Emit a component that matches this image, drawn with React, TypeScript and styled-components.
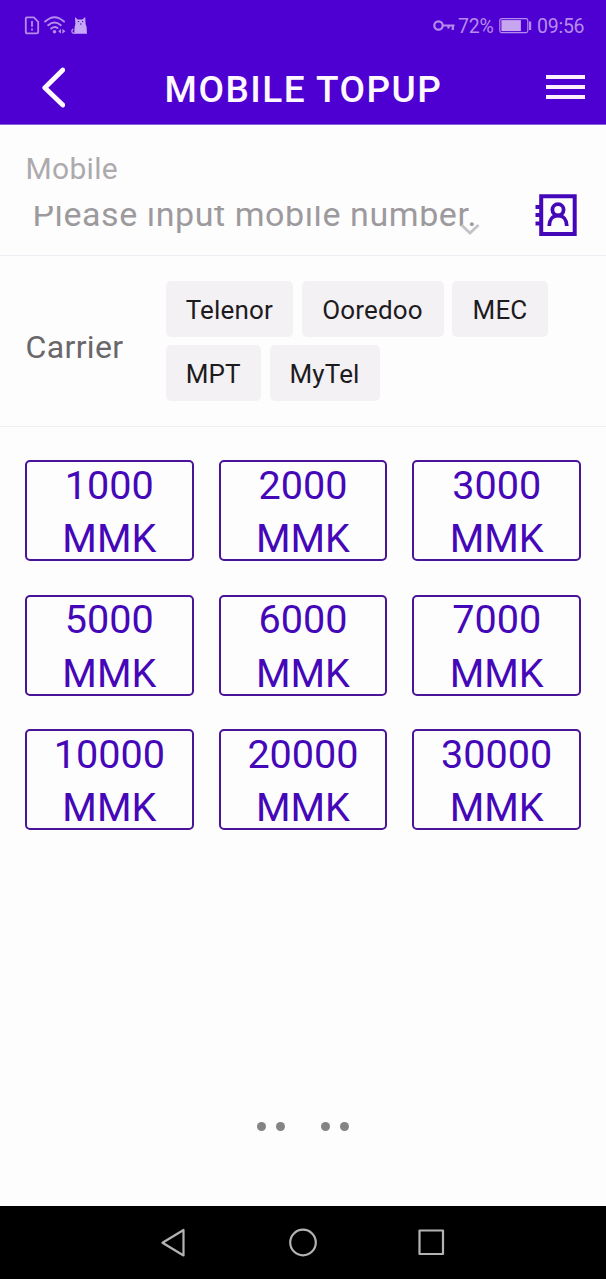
import React from 'react';
import styled, { createGlobalStyle } from 'styled-components';

const GlobalStyle = createGlobalStyle`
  * { box-sizing: border-box; }
  body { margin: 0; background: #fefdfe; font-family: Roboto, "Liberation Sans", sans-serif; }
  button { font-family: inherit; padding: 0; margin: 0; border: 0; background: none; }
`;

const Screen = styled.div`
  width: 606px;
  height: 1279px;
  display: flex;
  flex-direction: column;
  background: #fefdfe;
  overflow: hidden;
`;

const Header = styled.header`
  height: 125px;
  flex: none;
  background: #4d00d1;
  border-bottom: 1px solid #8a60dc;
`;

const StatusBar = styled.div`
  height: 52px;
  padding: 0 22px 0 24px;
  display: flex;
  align-items: center;
  justify-content: space-between;
  color: #b78bee;
`;

const StatusIcons = styled.div<{ $gap?: number }>`
  display: flex;
  align-items: center;
  gap: ${(p) => p.$gap ?? 0}px;
  svg { display: block; }
`;

const StatusText = styled.span<{ $left: number; $width: number }>`
  margin-left: ${(p) => p.$left}px;
  padding-top: 1px;
  font-size: 19.5px;
  line-height: 24px;
  width: ${(p) => p.$width}px;
  white-space: nowrap;
  letter-spacing: -0.25px;
`;

const TitleBar = styled.div`
  height: 72px;
  padding: 0 21px 0 41px;
  display: grid;
  grid-template-columns: 40px 1fr 40px;
  align-items: center;
  svg { display: block; }
`;

const Title = styled.h1`
  margin: 3px 0 0;
  padding-right: 19px;
  text-align: center;
  color: #fff8ff;
  font-size: 37px;
  line-height: 44px;
  font-weight: 500;
  letter-spacing: 1.5px;
  white-space: nowrap;
`;

const MobileSection = styled.section`
  height: 131px;
  flex: none;
  padding: 24px 26px 0 25.5px;
  border-bottom: 1px solid #f0edf4;
`;

const MobileLabel = styled.div`
  color: #acaaad;
  font-size: 30px;
  line-height: 40px;
  letter-spacing: 0.3px;
`;

const NumberRow = styled.div`
  display: flex;
  justify-content: space-between;
  align-items: flex-start;
  height: 50px;
`;

const NumberInput = styled.div`
  position: relative;
  width: 460px;
  height: 35px;
  margin-top: 17px;
  padding-left: 7px;
  overflow: hidden;
  color: #9c9a9d;
  svg { position: absolute; left: 434px; top: 13px; }
`;

const Placeholder = styled.div`
  margin-top: -12px;
  font-size: 34px;
  line-height: 40px;
  letter-spacing: 0.58px;
  white-space: nowrap;
`;

const ContactButton = styled.button`
  margin-top: 5px;
  margin-right: 1px;
  svg { display: block; }
`;

const CarrierSection = styled.section`
  height: 171px;
  flex: none;
  display: flex;
  padding: 25px 25px 25px 25.5px;
  border-bottom: 1px solid #f0edf4;
`;

const CarrierLabel = styled.div`
  width: 140px;
  padding-top: 46px;
  color: #69676a;
  font-size: 32px;
  line-height: 40px;
  letter-spacing: 0.35px;
`;

const ChipList = styled.div`
  flex: 1;
  display: flex;
  flex-wrap: wrap;
  align-content: flex-start;
  gap: 8px 8.5px;
`;

const Chip = styled.button<{ $width: number }>`
  width: ${(p) => p.$width}px;
  height: 56px;
  padding-top: 2px;
  border-radius: 5px;
  background: #f3f1f4;
  color: #1d1b1e;
  font-size: 26px;
  letter-spacing: 0.15px;
`;

const AmountGrid = styled.section`
  display: grid;
  grid-template-columns: repeat(3, 1fr);
  grid-auto-rows: 101px;
  gap: 33.5px 25px;
  padding: 33px 25px 0;
  flex: 1;
  align-content: start;
`;

const Amount = styled.button`
  border: 2px solid #4a1499;
  border-radius: 5px;
  padding-top: 3.5px;
  color: #4508b8;
  font-size: 39.6px;
  line-height: 53.4px;
  text-align: center;
  display: flex;
  flex-direction: column;
  align-items: center;
  justify-content: center;
  span { display: block; }
`;

const DotPairs = styled.div`
  display: flex;
  justify-content: center;
  gap: 36px;
  height: 84px;
  flex: none;
`;

const DotPair = styled.div`
  display: flex;
  gap: 10px;
`;

const Dot = styled.i`
  width: 9px;
  height: 9px;
  border-radius: 50%;
  background: #858386;
`;

const NavBar = styled.nav`
  height: 73px;
  flex: none;
  background: #000;
  display: flex;
  align-items: center;
  justify-content: space-between;
  padding: 0 160px 0 159px;
  svg { display: block; }
`;

const SimIcon = () => (
  <svg width="16" height="20" viewBox="0 0 16 20" fill="none" stroke="currentColor" strokeWidth="1.8">
    <path d="M2.8 1.4H9.8L14.2 5.8V16Q14.2 17.4 12.8 17.4H3.2Q1.8 17.4 1.8 16V2.4Q1.8 1.4 2.8 1.4Z" />
    <path d="M8 5V10.8M8 12.4V14.4" />
  </svg>
);

const WifiIcon = () => (
  <svg width="23" height="20" viewBox="0 0 23 20" fill="none" stroke="currentColor" strokeWidth="2" strokeLinecap="round">
    <path d="M1.2 5.6Q10.5 -3.2 20 5.6M4.2 9.2Q10.5 3.8 16.8 9.2M7.2 12.5Q10.5 9.8 13.5 12" />
    <circle cx="10.5" cy="15.7" r="1.8" fill="currentColor" stroke="none" />
    <path d="M17 12.8L14.2 15.3L17 17.8ZM18.4 12.8V17.8L21.4 15.3Z" fill="currentColor" stroke="none" />
  </svg>
);

const CatIcon = () => (
  <svg width="18" height="20" viewBox="0 0 18 20">
    <path d="M4 1L6.6 3.4H11.4L14.2 1L14.6 8L15.6 11L16 17.8H3.2L3.6 11L4.4 8Z" fill="#c7a8f5" />
    <path d="M5 17Q.5 18 .9 14.5L2.2 13" fill="none" stroke="#b78bee" strokeWidth="1.4" />
    <path d="M6.8 5.6H8.1M11 5.6H12.3M9 8H10.5" stroke="#4d00d1" strokeWidth="1" />
  </svg>
);

const KeyIcon = () => (
  <svg width="22" height="14" viewBox="0 0 22 14" fill="none" stroke="currentColor" strokeWidth="2.2">
    <circle cx="5.5" cy="6.5" r="4.2" />
    <path d="M10 6.5H21.5M19.8 6.5V11M15.5 6.5V9.5" />
  </svg>
);

const BatteryIcon = () => (
  <svg width="33" height="16" viewBox="0 0 33 16">
    <rect x=".8" y=".6" width="28" height="14" rx="1.8" fill="none" stroke="currentColor" strokeWidth="1.2" />
    <rect x="2.4" y="2.1" width="19.5" height="11" fill="#c7a5ef" />
    <rect x="30" y="3.5" width="2.2" height="8.5" fill="currentColor" />
  </svg>
);

const carriers = [
  { name: 'Telenor', width: 127.5 },
  { name: 'Ooredoo', width: 142 },
  { name: 'MEC', width: 96 },
  { name: 'MPT', width: 95.5 },
  { name: 'MyTel', width: 110 },
];

const amounts = [1000, 2000, 3000, 5000, 6000, 7000, 10000, 20000, 30000];

export default function App() {
  return (
    <Screen>
      <GlobalStyle />
      <Header>
        <StatusBar>
          <StatusIcons $gap={4}>
            <SimIcon />
            <WifiIcon />
            <CatIcon />
          </StatusIcons>
          <StatusIcons>
            <KeyIcon />
            <StatusText $left={3} $width={41}>72%</StatusText>
            <BatteryIcon />
            <StatusText $left={5} $width={47}>09:56</StatusText>
          </StatusIcons>
        </StatusBar>
        <TitleBar>
          <svg width="24" height="42" viewBox="0 0 24 42" fill="none" stroke="#fff8ff" strokeWidth="4.8" strokeLinecap="round" strokeLinejoin="round">
            <path d="M21.8 3L3.8 20.7L21.8 38" />
          </svg>
          <Title>MOBILE TOPUP</Title>
          <svg width="40" height="26" viewBox="0 0 40 26" fill="#fff0ff">
            <path d="M1 0H40V4H1ZM1 10H40V14H1ZM1 20H40V24H1Z" />
          </svg>
        </TitleBar>
      </Header>
      <MobileSection>
        <MobileLabel>Mobile</MobileLabel>
        <NumberRow>
          <NumberInput>
            <Placeholder>Please input mobile number.</Placeholder>
            <svg width="20" height="18" viewBox="0 0 20 18" fill="none" stroke="#c5c3c6" strokeWidth="2.8">
              <path d="M1.5 6L10 14L18.5 6" />
            </svg>
          </NumberInput>
          <ContactButton>
            <svg width="44" height="44" viewBox="0 0 44 44" fill="none" stroke="#4508b8" strokeWidth="4">
              <path d="M6.2 2.2H39.7V40H6.2Z" />
              <path d="M.5 13H6M.5 21H6M.5 29.5H6" />
              <circle cx="23" cy="15.8" r="5.6" strokeWidth="3.8" />
              <path d="M14.2 32C14.2 26 17.5 21.7 23 21.7S31.8 26 31.8 32" strokeWidth="3.8" />
            </svg>
          </ContactButton>
        </NumberRow>
      </MobileSection>
      <CarrierSection>
        <CarrierLabel>Carrier</CarrierLabel>
        <ChipList>
          {carriers.map((c) => (
            <Chip key={c.name} $width={c.width}>{c.name}</Chip>
          ))}
        </ChipList>
      </CarrierSection>
      <AmountGrid>
        {amounts.map((a) => (
          <Amount key={a}>
            <span>{a}</span>
            <span>MMK</span>
          </Amount>
        ))}
      </AmountGrid>
      <DotPairs>
        <DotPair><Dot /><Dot /></DotPair>
        <DotPair><Dot /><Dot /></DotPair>
      </DotPairs>
      <NavBar>
        <svg width="28" height="30" viewBox="0 0 28 30" fill="none" stroke="#b4b2b5" strokeWidth="2.2" strokeLinejoin="round">
          <path d="M24.5 2V27.5L3.5 14.7Z" />
        </svg>
        <svg width="30" height="30" viewBox="0 0 30 30" fill="none" stroke="#b4b2b5" strokeWidth="2.2">
          <circle cx="16" cy="14.5" r="12.8" />
        </svg>
        <svg width="30" height="30" viewBox="0 0 30 30" fill="none" stroke="#b4b2b5" strokeWidth="2.2" strokeLinejoin="round">
          <path d="M3.5 2.5H27V26H3.5Z" />
        </svg>
      </NavBar>
    </Screen>
  );
}
